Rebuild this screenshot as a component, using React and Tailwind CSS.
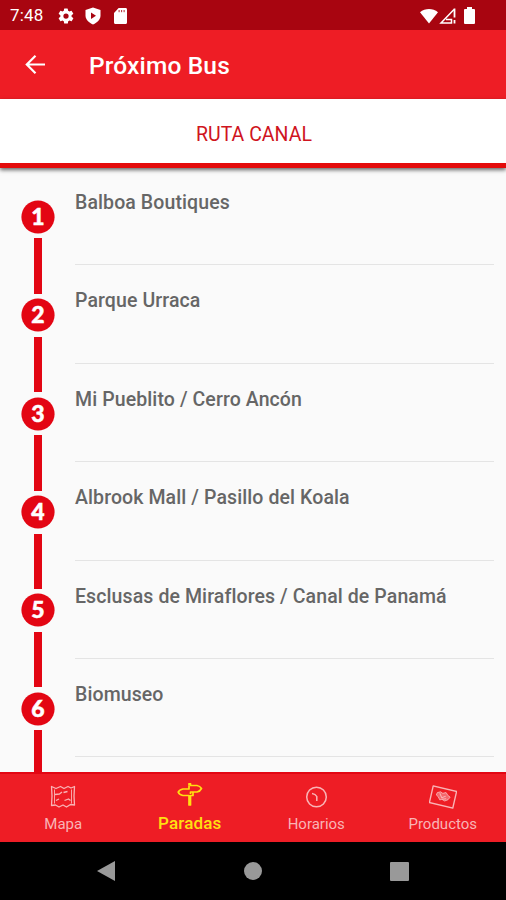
const stops = [
    'Balboa Boutiques',
    'Parque Urraca',
    'Mi Pueblito / Cerro Ancón',
    'Albrook Mall / Pasillo del Koala',
    'Esclusas de Miraflores / Canal de Panamá',
    'Biomuseo',
];

const tabs = [
    { label: 'Mapa', Icon: MapIcon },
    { label: 'Paradas', Icon: SignIcon, active: true },
    { label: 'Horarios', Icon: ClockIcon },
    { label: 'Productos', Icon: TicketIcon },
];

function MapIcon() {
    return (
        <svg className="h-[24px] w-[26px]" viewBox="0 0 26 24" fill="none" stroke="currentColor" strokeWidth="1.300" strokeLinejoin="round">
            <path d="M1.500 1.500 6 3.500l4.500-2L14 3.500l4-2 3 1.500 3.500-1.500-.5 9.500.5 9-4-.5-4 2.500-3.500-2-4 2-3.500-2-4 .5.500-9.500z" />
            <path d="M4.500 4.500v14M21.500 4.500v14" strokeWidth=".9" />
            <path d="M5 9.500 9.500 9l2.500-2M13.500 7.500l4-1M6 15.500l3-1.500M14.500 15.500l4-1.500 2 1.500" />
        </svg>
    );
}

function SignIcon() {
    return (
        <svg className="h-[24px] w-[26px]" viewBox="0 0 26 24" fill="none" stroke="currentColor" strokeWidth="1.700" strokeLinejoin="round">
            <path d="M12 2.500V.8h1.500v1.700H20q3 .5 4.500 3Q23 8.500 20 9h-6.500v2" />
            <path d="M12 2.500V6H6Q2.500 6.500 1.200 9.200 2.500 12 6 12.500h6V22h1.500V12.500H16V9" />
        </svg>
    );
}

function ClockIcon() {
    return (
        <svg className="h-[24px] w-[26px]" viewBox="0 0 26 24" fill="none" stroke="currentColor" strokeWidth="1.500">
            <circle cx="13.500" cy="12" r="9.800" />
            <path d="M9 8.500q3.500.5 4.800 3v4.500" />
        </svg>
    );
}

function TicketIcon() {
    return (
        <svg className="h-[24px] w-[28px]" viewBox="0 0 28 24" fill="none" stroke="currentColor" strokeWidth="1.400" strokeLinejoin="round">
            <g transform="rotate(13 14 12)">
                <path d="M2 3.500h24v17H2z" />
                <path d="m7.500 9 3-1.500 2.500 1 3-1.500 2.500 2.500 2.500 1-1.500 3-3 2-3-1-2 1-2.500-3-2-1z" fill="currentColor" fillOpacity=".5" strokeWidth=".8" />
                <path d="m10 9 3 4 3.500-2.500M13.500 14.500l4-1.500" strokeWidth="1" />
            </g>
        </svg>
    );
}

function StatusBar() {
    return (
        <div className="flex h-[30px] shrink-0 items-center bg-[#a80510] pl-[10px] pr-[32px] pt-px text-white">
            <span className="w-[47px] text-[17px] leading-none tracking-[0.2px]">7:48</span>
            <svg className="size-[18px]" viewBox="0 0 24 24" fill="currentColor">
                <path d="M19.400 13a7.500 7.500 0 0 0 0-2l2.100-1.600a.5.5 0 0 0 .1-.6l-2-3.500a.5.5 0 0 0-.6-.2l-2.500 1a7.300 7.300 0 0 0-1.700-1l-.4-2.600a.5.5 0 0 0-.5-.5h-4a.5.5 0 0 0-.5.500L9.100 5.100a7.300 7.300 0 0 0-1.700 1l-2.500-1a.5.5 0 0 0-.6.200l-2 3.500a.5.5 0 0 0 .1.600L4.500 11a7.500 7.500 0 0 0 0 2l-2.100 1.600a.5.5 0 0 0-.1.600l2 3.500a.5.5 0 0 0 .6.200l2.500-1a7.300 7.300 0 0 0 1.700 1l.4 2.600a.5.5 0 0 0 .5.500h4a.5.5 0 0 0 .5-.5l.4-2.600a7.300 7.300 0 0 0 1.700-1l2.500 1a.5.5 0 0 0 .6-.2l2-3.500a.5.5 0 0 0-.1-.6zM12 15.500a3.500 3.500 0 1 1 0-7 3.500 3.500 0 0 1 0 7z" />
            </svg>
            <svg className="ml-[9px] h-[18px] w-[18px]" viewBox="1 0 18 18">
                <path d="M10 .5 17.500 3v5.500c0 4-3 7-7.500 9-4.500-2-7.500-5-7.500-9V3z" fill="currentColor" />
                <path d="M8 5.500v6.500l5-3.200z" fill="#a80510" />
            </svg>
            <svg className="ml-[12px] h-[16px] w-[13px]" viewBox="0 0 14 16" preserveAspectRatio="none">
                <path d="M5 0h7.500C13.400 0 14 .6 14 1.500v13c0 .9-.6 1.500-1.500 1.500h-11C.6 16 0 15.400 0 14.500V5z" fill="currentColor" />
                <path d="M5.500 2v2.200M8.200 2v2.200M10.900 2v2.200" stroke="#a80510" strokeWidth=".9" />
            </svg>
            <svg className="ml-auto h-[16px] w-[18px]" viewBox="0 0 19 16" fill="currentColor">
                <path d="M0 4C5.500-.6 13.500-.6 19 4L9.500 16z" />
            </svg>
            <svg className="ml-[1px] h-[16px] w-[17px]" viewBox="0 0 17 16">
                <path d="M15 1.500 2 15h10.500v-3.500H7" fill="none" stroke="currentColor" strokeWidth="1.500" />
                <path d="M15.500.5v9M15.500 12v3.500" stroke="currentColor" strokeWidth="1.800" />
            </svg>
            <svg className="ml-[8px] mr-[-1px] h-[17px] w-[11px]" viewBox="0 0 11 17" fill="currentColor">
                <path d="M3 0h5v2h2q1 0 1 1v13q0 1-1 1H1q-1 0-1-1V3q0-1 1-1h2z" />
            </svg>
        </div>
    );
}

function Header() {
    return (
        <header className="flex h-[69px] shrink-0 items-center bg-[#ee1d25] pl-[25px] text-white">
            <svg className="h-[20px] w-[21px]" viewBox="0 0 21 20" fill="none" stroke="currentColor" strokeWidth="2.200">
                <path d="M20 9.500H2M10.500.8 1.800 9.500l8.700 8.800" />
            </svg>
            <h1 className="ml-[43px] mt-[3px] text-[24.5px] font-medium leading-none tracking-[0.15px]">Próximo Bus</h1>
        </header>
    );
}

function Stop({ number, name }) {
    return (
        <li className="flex h-[98.4px] shrink-0">
            <div className="flex w-[75px] shrink-0 flex-col items-center">
                <div className={`h-[28.4px] w-[8px] shrink-0 ${number > 1 ? 'bg-[#e30613]' : ''}`} />
                <svg className="my-[4.5px] h-[34px] w-[34px] shrink-0" viewBox="0 0 34 34">
                    <circle cx="17" cy="17" r="16.600" fill="#e30613" />
                    <text x="17" y="25.200" textAnchor="middle" fill="#fff" stroke="#fff" strokeWidth=".5" className="font-[Lato,sans-serif] text-[23px] font-black">{number}</text>
                </svg>
                <div className="w-[8px] grow bg-[#e30613]" />
            </div>
            <div className="mr-[12px] grow border-b border-[#e4e4e4] pt-[24px]">
                <p className="whitespace-nowrap text-[19.5px] font-medium leading-[23px] tracking-[0.1px] text-[#666]">{name}</p>
            </div>
        </li>
    );
}

export default function App() {
    return (
        <div className="flex h-[900px] w-[506px] flex-col overflow-hidden bg-[#fafafa] font-[Roboto,sans-serif]">
            <StatusBar />
            <Header />
            <div className="z-10 flex h-[69px] shrink-0 items-center justify-center border-b-[5px] border-[#e30b0b] bg-white pl-[2px] pt-[8px] shadow-[0_2px_4px_rgba(0,0,0,0.6)]">
                <span className="text-[19.5px] text-[#cf1420]">RUTA CANAL</span>
            </div>
            <ul className="-mt-px flex min-h-0 grow flex-col overflow-hidden">
                {stops.map((name, i) => <Stop key={name} number={i + 1} name={name} />)}
                <li className="flex w-[75px] shrink-0 justify-center">
                    <div className="h-[28px] w-[8px] bg-[#e30613]" />
                </li>
            </ul>
            <nav className="grid h-[70px] shrink-0 grid-cols-4 border-t-2 border-[#e30613] bg-[#ee1d25]">
                {tabs.map(({ label, Icon, active }) => (
                    <div
                        key={label}
                        className={`flex flex-col items-center ${active ? 'pt-[9px] text-[17px] font-medium text-[#ffe010]' : 'pt-[11px] text-[15px] text-[#f9b4b6]'}`}
                    >
                        <Icon />
                        <span className={active ? 'mt-[6px] leading-[20px] tracking-[0.15px]' : 'mt-[5px] leading-[20px]'}>{label}</span>
                    </div>
                ))}
            </nav>
            <div className="flex h-[58px] shrink-0 items-center justify-between bg-black px-[97px]">
                <svg className="h-[20px] w-[18px]" viewBox="0 0 18 20" fill="#999"><path d="M0 10 18 0v20z" /></svg>
                <div className="ml-px size-[18px] rounded-full bg-[#999]" />
                <div className="size-[19px] rounded-[1px] bg-[#999]" />
            </div>
        </div>
    );
}
